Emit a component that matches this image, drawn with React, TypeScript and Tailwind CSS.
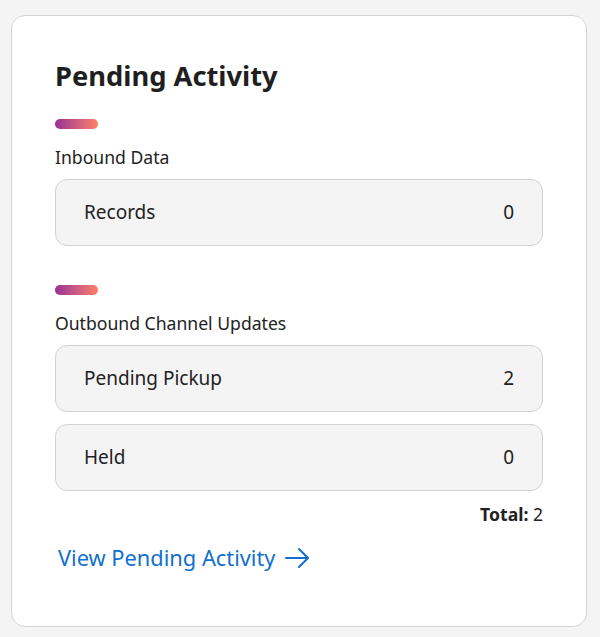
import React from "react";

const font = { fontFamily: '"Noto Sans", "Open Sans", sans-serif' };

const Bar = () => (
  <div className="h-[10px] w-[43px] rounded-full bg-gradient-to-r from-[#9b2f94] to-[#ff7f62]" />
);

const Row = ({ label, value }: { label: string; value: number }) => (
  <div className="flex h-[67px] items-center justify-between rounded-[12px] border-[1.5px] border-[#d2d2d2] bg-[#f4f4f4] px-[28px] text-[19px] text-[#222]">
    <span>{label}</span>
    <span>{value}</span>
  </div>
);

export default function App() {
  return (
    <div className="min-h-[637px] bg-[#f4f4f4] px-[11px] pt-[15px] pb-[11px]" style={font}>
      <div className="flex w-[576px] flex-col rounded-[14px] border-[1.5px] border-[#d4d4d4] bg-white px-[43px] pt-[42px] pb-[53px]">
        <h2 className="text-[27.3px] font-bold leading-[36px] text-[#1f1f1f]">Pending Activity</h2>

        <div className="mt-[25px]">
          <Bar />
        </div>
        <div className="mt-[16px] text-[17.6px] leading-[24px] text-[#222]">Inbound Data</div>
        <div className="mt-[10px]">
          <Row label="Records" value={0} />
        </div>

        <div className="mt-[39px]">
          <Bar />
        </div>
        <div className="mt-[16px] text-[17.6px] leading-[24px] text-[#222]">Outbound Channel Updates</div>
        <div className="mt-[10px] flex flex-col gap-[12px]">
          <Row label="Pending Pickup" value={2} />
          <Row label="Held" value={0} />
        </div>

        <div className="mt-[11px] text-right text-[17.6px] leading-[24px] text-[#222]">
          <span className="font-bold">Total:</span> 2
        </div>

        <a href="#" className="mt-[17px] flex items-center gap-[9px] pl-[3px] text-[21.8px] leading-[30px] text-[#1170cf]">
          <span>View Pending Activity</span>
          <svg width="26" height="22" viewBox="0 0 26 22" fill="none" stroke="currentColor" strokeWidth="2" strokeLinecap="round" strokeLinejoin="round">
            <path d="M2 11h22" />
            <path d="M15 2l9 9-9 9" />
          </svg>
        </a>
      </div>
    </div>
  );
}
